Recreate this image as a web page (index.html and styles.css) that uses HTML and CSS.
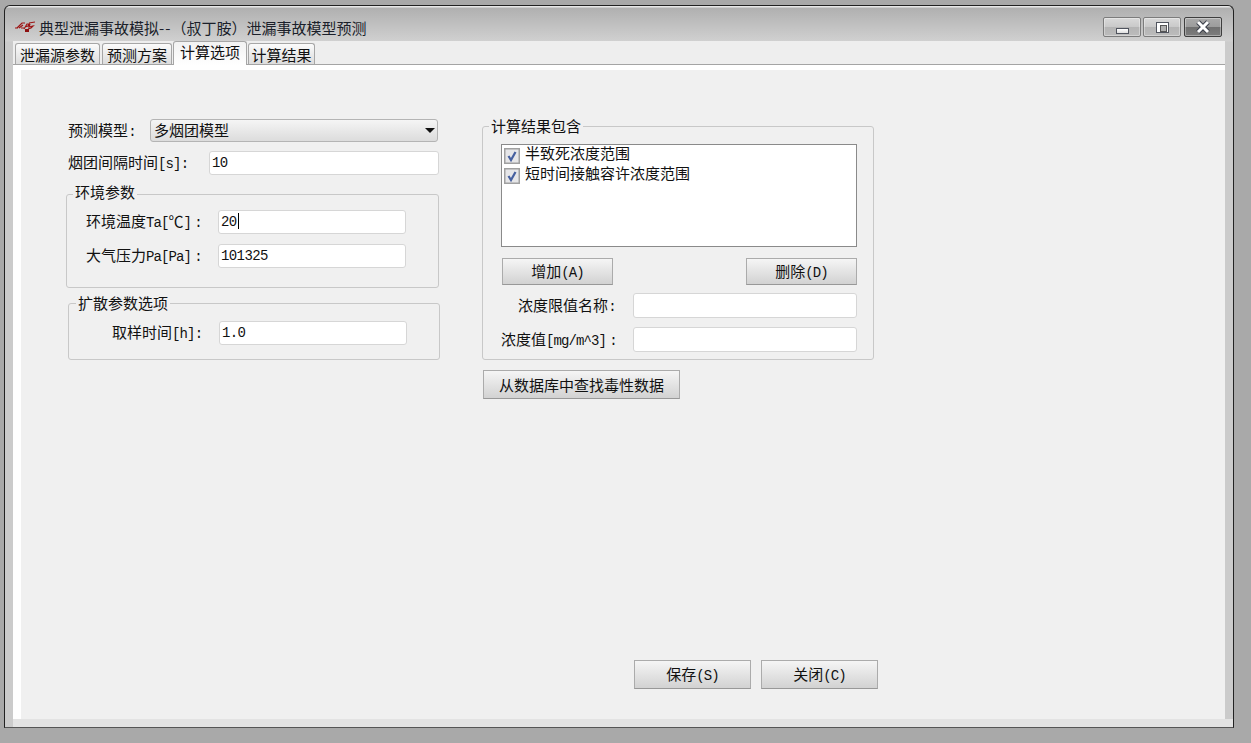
FILE: index.html
```html
<!DOCTYPE html>
<html lang="zh-CN">
<head>
<meta charset="utf-8">
<title>典型泄漏事故模拟</title>
<link rel="stylesheet" href="styles.css">
</head>
<body>
<div class="window">
  <header class="titlebar">
    <svg class="app-icon" width="20" height="11" viewBox="0 0 20 11">
      <path d="M0 7 L3 7 M2 7 L7 2 L10 2 M4 7 L8 4 M6 7 L9 7 M9 8 L12 3 L14 3 L13 5 L10 6 M14 2 L20 1 M15 3 L14 6 L18 5 L16 7 L13 8" fill="none" stroke="#9c1414" stroke-width="1.2"/>
      <rect x="10" y="8" width="4" height="3" fill="#8e1010"/>
    </svg>
    <h1 class="title">典型泄漏事故模拟<span class="dashes">--</span>（叔丁胺）泄漏事故模型预测</h1>
    <div class="win-buttons">
      <button class="win-btn"><span class="glyph-min"></span></button>
      <button class="win-btn"><span class="glyph-max"></span></button>
      <button class="win-btn win-close">
        <svg width="16" height="14" viewBox="0 0 16 14"><path d="M3 2 L13 12 M13 2 L3 12" stroke="#3a3f4a" stroke-width="5"/><path d="M3 2 L13 12 M13 2 L3 12" stroke="#fff" stroke-width="3"/></svg>
      </button>
    </div>
  </header>

  <nav class="tabs">
    <div class="tab">泄漏源参数</div>
    <div class="tab">预测方案</div>
    <div class="tab tab-active">计算选项</div>
    <div class="tab tab-last">计算结果</div>
  </nav>

  <div class="page">
    <main class="panel">
      <div class="columns">
        <section class="col-left">
          <div class="row">
            <label class="label w-model">预测模型<span class="colon">:</span></label>
            <div class="combo">多烟团模型<span class="arrow"></span></div>
          </div>
          <div class="row row-interval">
            <label class="label w-interval">烟团间隔时间<span class="lat">[s]</span><span class="colon">:</span></label>
            <div class="field w-230">10</div>
          </div>

          <div class="group group-env">
            <div class="legend legend-env">环境参数</div>
            <div class="row">
              <label class="label w-env">环境温度<span class="lat">Ta[</span>℃<span class="lat">]</span><span class="colon colon-wide">:</span></label>
              <div class="field w-188">20<span class="caret"></span></div>
            </div>
            <div class="row row-next">
              <label class="label w-env">大气压力<span class="lat">Pa[Pa]</span><span class="colon colon-wide">:</span></label>
              <div class="field w-188">101325</div>
            </div>
          </div>

          <div class="group group-diff">
            <div class="legend legend-diff">扩散参数选项</div>
            <div class="row">
              <label class="label w-diff">取样时间<span class="lat">[h]</span><span class="colon">:</span></label>
              <div class="field w-188">1.0</div>
            </div>
          </div>
        </section>

        <section class="col-right">
          <div class="group group-result">
            <div class="legend legend-result">计算结果包含</div>
            <div class="list">
              <div class="list-item">
                <svg class="check" width="16" height="16" viewBox="0 0 16 16"><rect x=".75" y=".75" width="14.5" height="14.5" fill="#e6e6e8" stroke="#a0a0a0" stroke-width="1.5"/><path d="M4.5 8 L7 12 L11.5 4" fill="none" stroke="#46609f" stroke-width="2.2"/></svg>
                <span class="item-text">半致死浓度范围</span>
              </div>
              <div class="list-item">
                <svg class="check" width="16" height="16" viewBox="0 0 16 16"><rect x=".75" y=".75" width="14.5" height="14.5" fill="#e6e6e8" stroke="#a0a0a0" stroke-width="1.5"/><path d="M4.5 8 L7 12 L11.5 4" fill="none" stroke="#46609f" stroke-width="2.2"/></svg>
                <span class="item-text">短时间接触容许浓度范围</span>
              </div>
            </div>
            <div class="list-actions">
              <button class="btn btn-small">增加<span class="lat">(A)</span></button>
              <button class="btn btn-small">删除<span class="lat">(D)</span></button>
            </div>
            <div class="row row-limit">
              <label class="label w-limit limit-name">浓度限值名称<span class="colon">:</span></label>
              <div class="field w-224"></div>
            </div>
            <div class="row row-value">
              <label class="label w-limit">浓度值<span class="lat">[mg/m^3]</span><span class="colon colon-wide">:</span></label>
              <div class="field w-224"></div>
            </div>
          </div>
          <button class="btn btn-db">从数据库中查找毒性数据</button>
        </section>
      </div>

      <footer class="footer">
        <button class="btn btn-foot">保存<span class="lat">(S)</span></button>
        <button class="btn btn-foot">关闭<span class="lat">(C)</span></button>
      </footer>
    </main>
  </div>
  <div class="bottom-strip"></div>
</div>
</body>
</html>
```

FILE: styles.css
```css
* { box-sizing: border-box; }

html, body { height: 100%; }

body {
  margin: 0;
  background: #a9a9a9;
  overflow: hidden;
  font-family: "Noto Sans CJK SC", "Liberation Sans", sans-serif;
  font-size: 15px;
  color: #111;
}

.window {
  width: 1230px;
  height: 723px;
  margin: 5px 0 0 4px;
  padding: 0 8px;
  display: flex;
  flex-direction: column;
  border: 1px solid #222;
  border-bottom-color: #555;
  border-radius: 6px 6px 0 0;
  background: linear-gradient(#e8e8e8 0, #e8e8e8 1px, #b0b0b0 2px, #d0d0d0 35px, #cbcbcb 36px, #cbcbcb 100%);
}

.titlebar {
  height: 35px;
  flex: none;
  display: flex;
  align-items: center;
  padding-top: 9px;
  margin-left: 2px;
}

.app-icon { flex: none; margin-top: -4px; }

.title {
  margin: 0 0 0 4px;
  font-size: 15px;
  font-weight: 400;
  line-height: 20px;
  color: #1b1f2a;
  white-space: nowrap;
}

.dashes { letter-spacing: 1px; }

.win-buttons {
  margin-left: auto;
  margin-right: 3px;
  margin-top: -2px;
  display: flex;
  gap: 2px;
}

.win-btn {
  width: 38px;
  height: 20px;
  padding: 0;
  display: flex;
  align-items: center;
  justify-content: center;
  border: 1px solid #7c7c7c;
  border-radius: 2px;
  background: linear-gradient(#d9d9d9 0, #c9c9c9 50%, #b4b4b4 50%, #bcbcbc 100%);
  box-shadow: inset 0 0 0 1px rgba(255, 255, 255, .35);
}

.win-close {
  margin-left: 1px;
  border-color: #3e3e3e;
  background: linear-gradient(#a9a9a9 0, #9c9c9c 50%, #6f6f6f 50%, #7d7d7d 100%);
}

.glyph-min {
  display: block;
  width: 13px;
  height: 6px;
  margin-top: 7px;
  border: 1px solid #50545e;
  background: linear-gradient(#fff, #dedede);
}

.glyph-max {
  display: block;
  width: 13px;
  height: 11px;
  border: 1px solid #50545e;
  background: #fff;
  position: relative;
}

.glyph-max::after {
  content: "";
  position: absolute;
  left: 3px;
  top: 2px;
  width: 5px;
  height: 5px;
  border: 1px solid #555;
  background: #b0b0b0;
}

.tabs {
  height: 23px;
  flex: none;
  display: flex;
  align-items: flex-end;
  gap: 2px;
  padding-left: 2px;
  background: #eeeeee;
}

.tab {
  height: 21px;
  padding: 0 4px;
  border: 1px solid #a6a6a6;
  border-bottom: 0;
  border-radius: 3px 3px 0 0;
  background: linear-gradient(#fbfbfb, #dcdcdc);
  font-size: 15px;
  line-height: 21px;
  white-space: nowrap;
}

.tab-active {
  height: 24px;
  margin: 0 0 -1px -1px;
  padding: 0 6px;
  background: linear-gradient(#f2f2f2, #ffffff);
  line-height: 20px;
  position: relative;
  z-index: 1;
}

.tab-last {
  margin-left: -1px;
  padding: 0 2.5px;
}

.page {
  flex: 1;
  min-height: 0;
  display: flex;
  padding: 5px 0 0 8px;
  border-top: 1px solid #a4a4a4;
  background: #fff;
}

.panel {
  flex: 1;
  display: flex;
  flex-direction: column;
  justify-content: space-between;
  padding: 49px 347px 30px 45px;
  background: #f0f0f0;
}

.bottom-strip {
  height: 8px;
  flex: none;
  margin-right: -8px;
  background: #e3e3e3;
}

.columns { display: flex; gap: 42px; }
.col-left { width: 374px; flex: none; }
.col-right { width: 392px; flex: none; padding-top: 7px; }

.row { display: flex; align-items: center; }
.row-interval { margin-top: 9px; }
.row-next { margin-top: 10px; }
.row-limit { margin-top: 8px; }
.row-value { margin-top: 9px; }

.col-left > .row { padding-left: 2px; }

.label {
  flex: none;
  line-height: 20px;
  white-space: nowrap;
}

.w-model { width: 82px; }
.w-interval { width: 141px; }
.w-env { width: 132px; }
.w-diff { width: 107px; }
.w-limit { width: 132px; }
.limit-name { padding-left: 17px; }

.lat {
  font-family: "Liberation Mono", monospace;
  font-size: 14px;
  letter-spacing: -.9px;
}

.colon {
  display: inline-block;
  width: 9px;
  font-family: "Liberation Mono", monospace;
  font-size: 14px;
  text-align: center;
}

.colon-wide { width: 15px; }

.combo {
  width: 288px;
  height: 23px;
  padding: 0 0 2px 3px;
  display: flex;
  align-items: center;
  justify-content: space-between;
  border: 1px solid #b4b4b4;
  border-radius: 3px;
  background: linear-gradient(#f5f5f5, #dcdcdc);
  line-height: 20px;
}

.arrow {
  width: 0;
  height: 0;
  margin: 2px 2px 0 0;
  border-style: solid;
  border-width: 5px 5.5px 0;
  border-color: #111 transparent transparent;
}

.field {
  flex: none;
  height: 24px;
  padding-left: 2px;
  border: 1px solid #d6d6d6;
  border-radius: 3px;
  background: #fff;
  font-family: "Liberation Mono", monospace;
  font-size: 14px;
  letter-spacing: -.6px;
  line-height: 22px;
}

.w-230 { width: 230px; }
.w-188 { width: 188px; }
.w-224 { width: 224px; height: 25px; }

.caret {
  display: inline-block;
  width: 1px;
  height: 16px;
  margin-left: 1px;
  vertical-align: -3px;
  background: #000;
}

.group {
  border: 1px solid #c8c8c8;
  border-radius: 3px;
}

.group-env { width: 373px; height: 94px; margin-top: 19px; padding-left: 19px; }
.group-diff { width: 372px; height: 57px; margin: 15px 0 0 2px; padding-left: 43px; }
.group-result { width: 392px; height: 234px; padding: 0 16px 0 18px; }

.legend {
  display: table;
  padding: 0 2px;
  background: #f0f0f0;
  line-height: 20px;
}

.legend-env { margin: -13px 0 8px -13px; }
.legend-diff { margin: -11px 0 8px -36px; }
.legend-result { margin: -11px 0 8px -12px; }

.list {
  width: 356px;
  height: 103px;
  padding: 0 2px;
  border: 1px solid #8a8a8a;
  background: #fff;
}

.list-item {
  height: 20px;
  display: flex;
  gap: 5px;
}

.check { flex: none; margin-top: 3px; }

.item-text { line-height: 16px; }

.list-actions {
  margin: 11px 0 0 1px;
  display: flex;
  justify-content: space-between;
}

.btn {
  padding: 0;
  border: 1px solid #ababab;
  border-bottom-color: #989898;
  background: linear-gradient(#f5f5f5, #d2d2d2);
  font: inherit;
  color: inherit;
  line-height: 20px;
}

.btn-small { width: 111px; height: 27px; }
.btn-db { width: 197px; height: 29px; margin: 10px 0 0 1px; }
.btn-foot { width: 117px; height: 29px; }

.footer {
  display: flex;
  justify-content: flex-end;
  gap: 10px;
}
```
